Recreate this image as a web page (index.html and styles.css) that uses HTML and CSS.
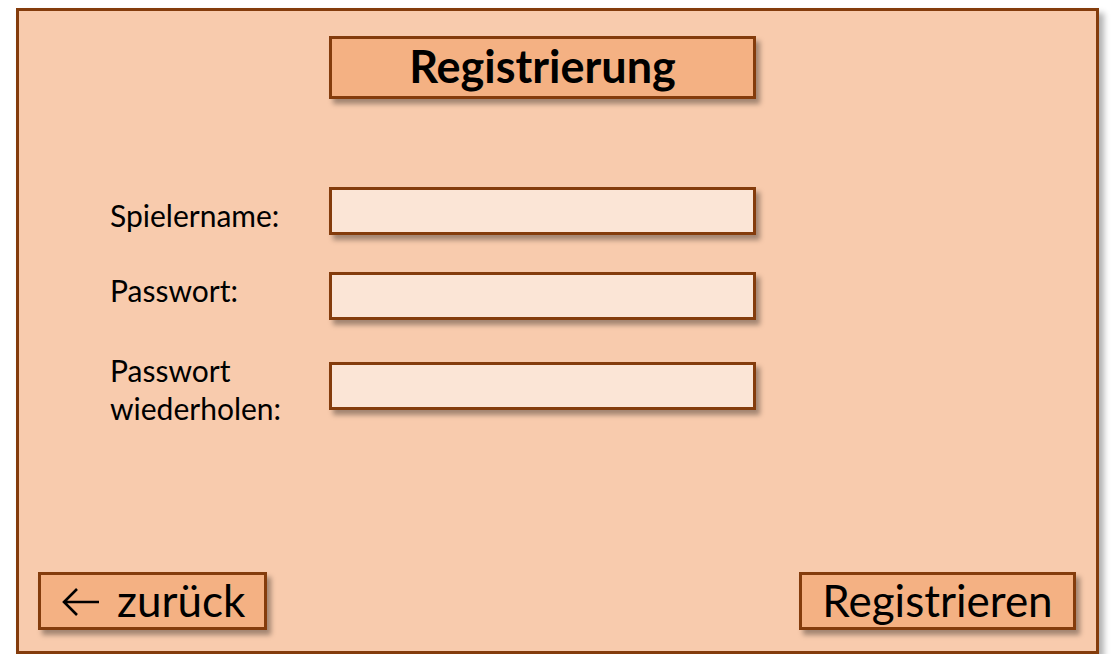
FILE: index.html
```html
<!DOCTYPE html>
<html lang="de">
<head>
<meta charset="utf-8">
<title>Registrierung</title>
<link rel="stylesheet" href="styles.css">
</head>
<body>
<div class="frame">
  <div class="title-box">Registrierung</div>
  <div class="form">
    <div class="row row-1">
      <label class="label">Spielername:</label>
      <div class="input"></div>
    </div>
    <div class="row row-2">
      <label class="label">Passwort:</label>
      <div class="input"></div>
    </div>
    <div class="row row-3">
      <label class="label">Passwort<br>wiederholen:</label>
      <div class="input"></div>
    </div>
  </div>
  <div class="footer">
    <div class="btn btn-back">
      <svg class="arrow" width="38" height="30" viewBox="0 0 38 30"><path d="M37 15H2M15 2L2 15L15 28" fill="none" stroke="#000" stroke-width="2.6" stroke-linecap="butt" stroke-linejoin="miter"/></svg>
      <span>zurück</span>
    </div>
    <div class="btn btn-register">Registrieren</div>
  </div>
</div>
</body>
</html>
```
FILE: styles.css
```css
html, body {
  margin: 0;
  padding: 0;
  background: #ffffff;
}
body {
  font-family: Lato, "Liberation Sans", sans-serif;
  color: #000;
}
.frame {
  box-sizing: border-box;
  margin: 8px 0 0 16px;
  width: 1083px;
  height: 646px;
  background: #f8cbad;
  border: 3px solid #843c0c;
  box-shadow: 5px 5px 6px rgba(0, 0, 0, 0.3);
  display: flex;
  flex-direction: column;
}
.title-box {
  box-sizing: border-box;
  margin: 25px 0 0 310px;
  width: 427px;
  height: 63px;
  background: #f4b183;
  border: 3px solid #843c0c;
  box-shadow: 4px 5px 5px rgba(0, 0, 0, 0.35);
  display: flex;
  align-items: center;
  justify-content: center;
  font-weight: 700;
  font-size: 45px;
  padding-bottom: 4px;
}
.form {
  margin: 88px 0 0 91px;
  display: flex;
  flex-direction: column;
  gap: 37px;
}
.row {
  display: flex;
  align-items: center;
  height: 48px;
}
.row-3 {
  margin-top: 5px;
}
.label {
  width: 219px;
  font-size: 30px;
  line-height: 38px;
  white-space: nowrap;
}
.row-1 .label { margin-top: 8px; }
.row-2 .label { margin-top: -12px; }
.row-3 .label { margin-top: 6px; }
.input {
  box-sizing: border-box;
  width: 427px;
  height: 48px;
  background: #fbe5d6;
  border: 3px solid #843c0c;
  box-shadow: 4px 5px 5px rgba(0, 0, 0, 0.35);
}
.footer {
  margin-top: auto;
  padding: 0 20px 21px 19px;
  display: flex;
  justify-content: space-between;
}
.btn {
  box-sizing: border-box;
  height: 58px;
  background: #f4b183;
  border: 3px solid #843c0c;
  box-shadow: 4px 5px 5px rgba(0, 0, 0, 0.35);
  display: flex;
  align-items: center;
  justify-content: center;
  font-size: 44px;
  padding-bottom: 3px;
}
.btn-back {
  width: 229px;
  gap: 17px;
  justify-content: flex-start;
  padding-left: 21px;
}
.btn-register {
  width: 277px;
}
.arrow {
  display: block;
  margin-top: 5px;
}
```
